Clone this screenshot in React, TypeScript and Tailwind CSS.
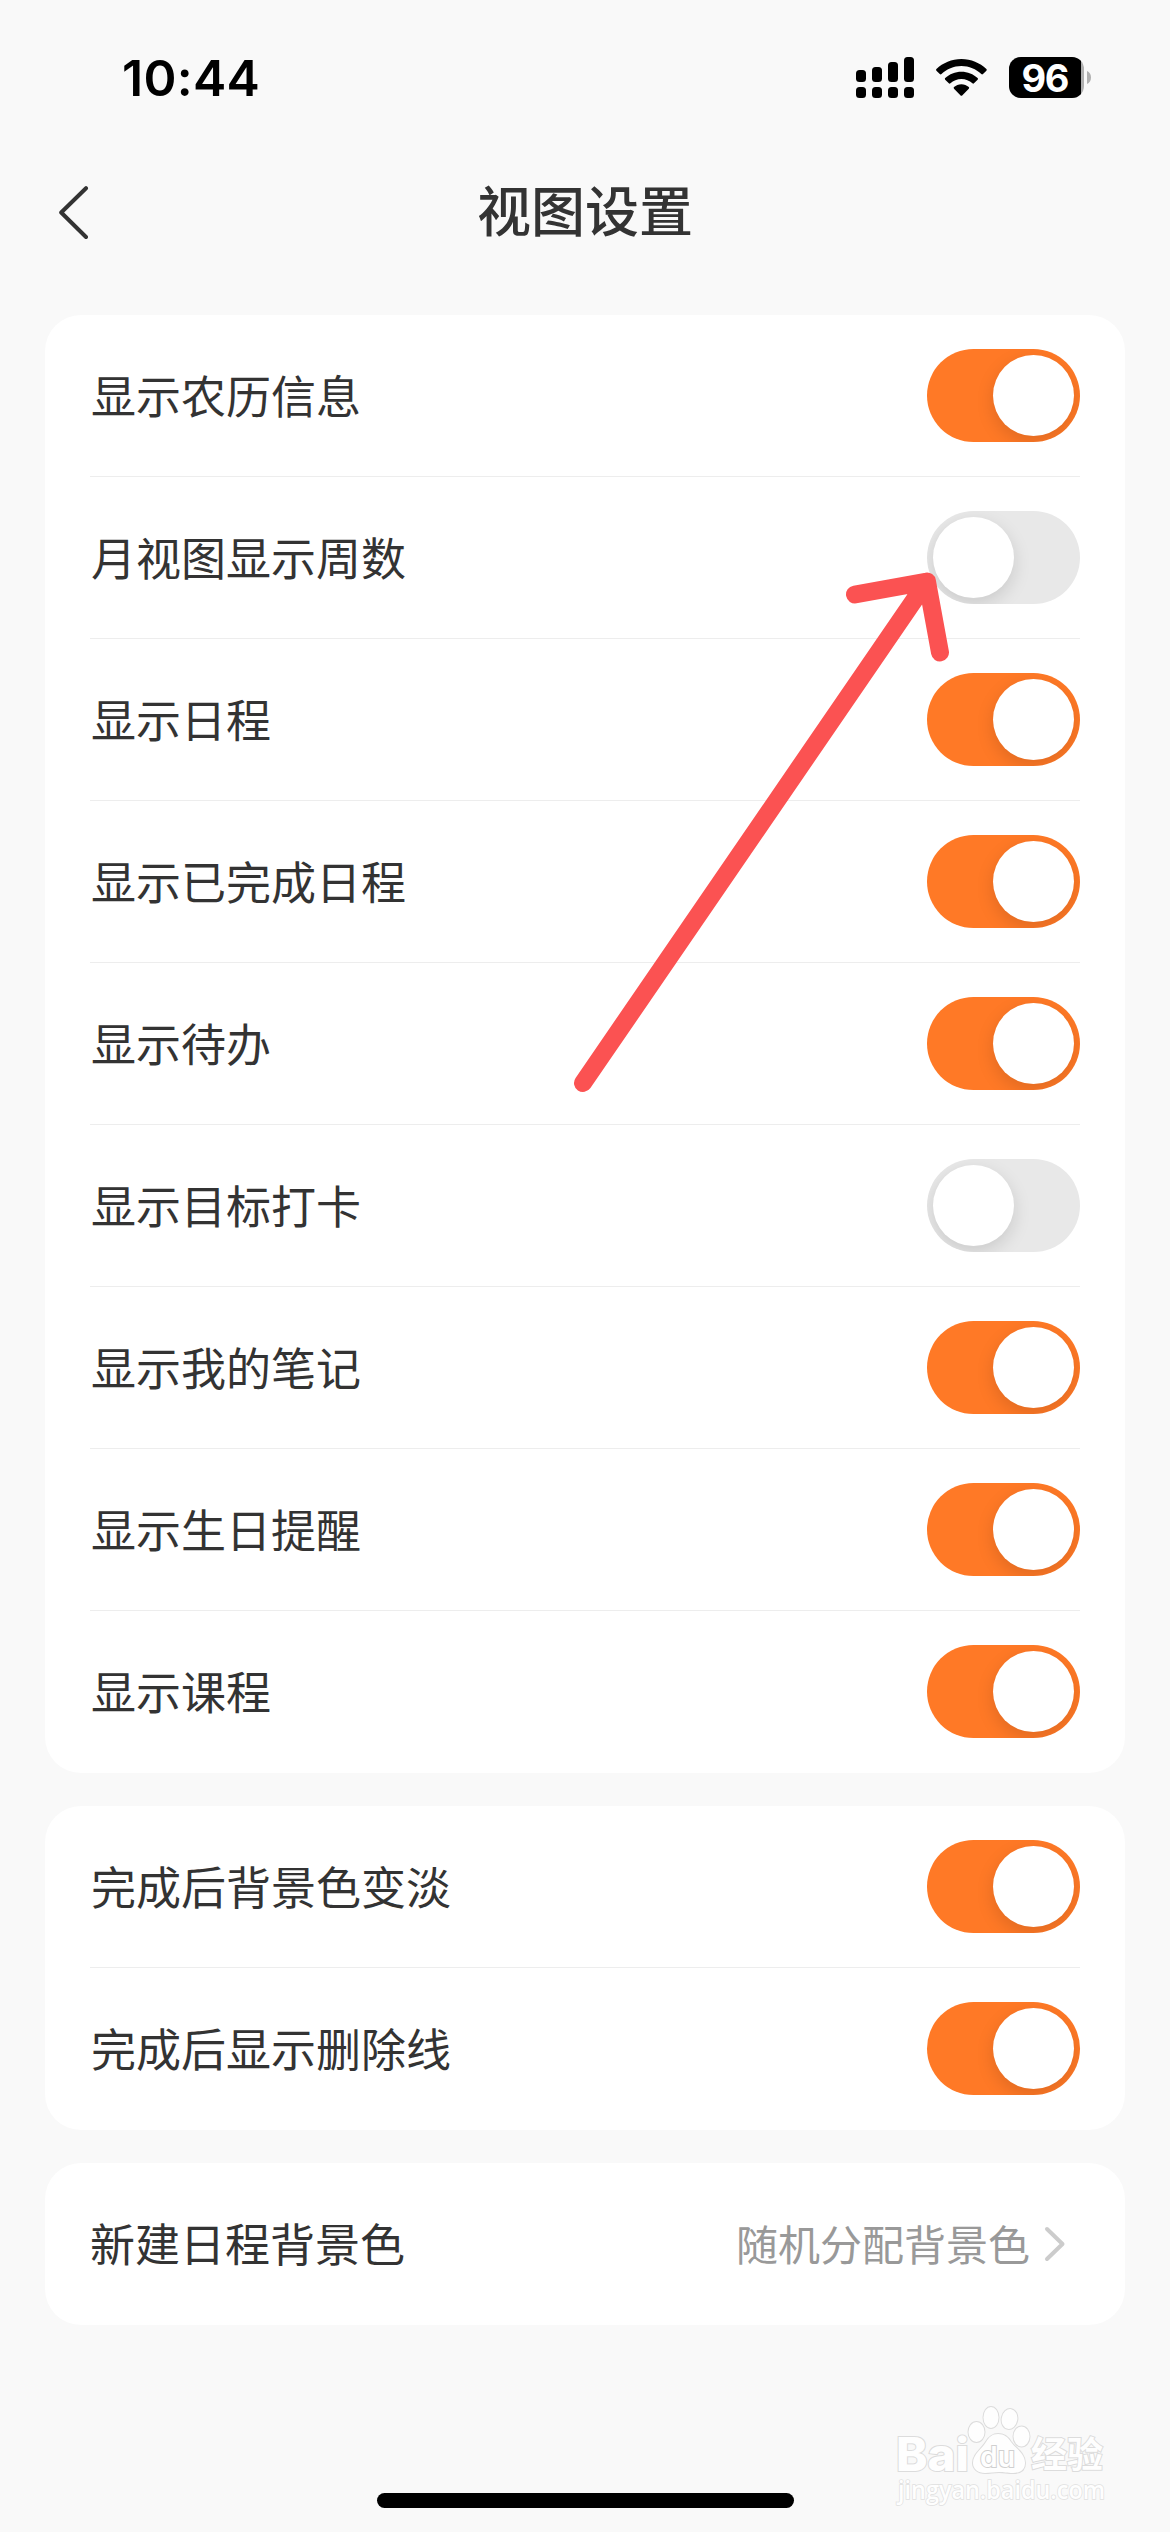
import { useState } from 'react'

type Option = { label: string; on: boolean }

const displayOptions: Option[] = [
  { label: '显示农历信息', on: true },
  { label: '月视图显示周数', on: false },
  { label: '显示日程', on: true },
  { label: '显示已完成日程', on: true },
  { label: '显示待办', on: true },
  { label: '显示目标打卡', on: false },
  { label: '显示我的笔记', on: true },
  { label: '显示生日提醒', on: true },
  { label: '显示课程', on: true },
]

const finishedOptions: Option[] = [
  { label: '完成后背景色变淡', on: true },
  { label: '完成后显示删除线', on: true },
]

function StatusBar() {
  return (
    <div className="flex h-[156px] items-start justify-between pt-[48px] pr-[79px] pl-[122px] font-['Inter',sans-serif] text-black">
      <div className="text-[50px] leading-[60px] font-semibold tracking-[0.3px]">10:44</div>
      <svg width="235" height="60" viewBox="856 48 235 60">
        <clipPath id="battery">
          <rect x="1009" y="57" width="75" height="41" rx="12" />
        </clipPath>
        <rect x="856" y="70" width="10" height="12" rx="3.5" />
        <rect x="872" y="67" width="10" height="15" rx="3.5" />
        <rect x="888" y="62" width="10" height="20" rx="3.5" />
        <rect x="904" y="57" width="10" height="25" rx="3.5" />
        <rect x="856" y="87" width="10" height="11" rx="3.5" />
        <rect x="872" y="87" width="10" height="11" rx="3.5" />
        <rect x="888" y="87" width="10" height="11" rx="3.5" />
        <rect x="904" y="87" width="10" height="11" rx="3.5" />
        <path d="M961.4 59c9.700 0 18.500 3.800 25 10.100.5.500.5 1.100 0 1.600l-3.400 3.400c-.5.500-1.200.5-1.700 0-5.200-5-12.200-8-19.900-8s-14.700 3-19.900 8c-.5.500-1.200.5-1.700 0l-3.400-3.400c-.5-.5-.5-1.100 0-1.600 6.500-6.300 15.300-10.100 25-10.100z" />
        <path d="M961.4 71.800c6.200 0 11.900 2.400 16.200 6.300.5.500.5 1.200 0 1.700l-3.600 3.500c-.5.500-1.100.5-1.600 0-2.900-2.600-6.800-4.200-11-4.200s-8.100 1.600-11 4.200c-.5.500-1.100.5-1.600 0l-3.600-3.500c-.5-.5-.5-1.200 0-1.700 4.300-3.900 10-6.300 16.200-6.300z" />
        <path d="M961.4 84.300c2.800 0 5.400 1.100 7.400 2.800.5.500.5 1.100 0 1.600l-6.600 6.700c-.5.500-1.100.5-1.600 0l-6.600-6.700c-.5-.5-.5-1.100 0-1.600 2-1.700 4.600-2.800 7.400-2.800z" />
        <g clipPath="url(#battery)">
          <rect x="1009" y="57" width="75" height="41" fill="#b0b0b0" />
          <rect x="1009" y="57" width="72" height="41" />
        </g>
        <path d="M1087 71c2.500 1 4 3.500 4 6.500s-1.500 5.500-4 6.500z" fill="#b0b0b0" />
        <text x="1045.500" y="91.500" textAnchor="middle" fontSize="38" fontWeight="700" fill="#fff" textLength="48">96</text>
      </svg>
    </div>
  )
}

function TitleBar() {
  return (
    <div className="grid h-[159px] grid-cols-3 items-start pt-5">
      <svg className="mt-[10px] ml-[58px]" width="32" height="54" viewBox="0 0 32 54" fill="none">
        <path d="M28 2.200 3.200 26.500 28 51" stroke="#333" strokeWidth="4" strokeLinecap="round" strokeLinejoin="round" />
      </svg>
      <h1 className="text-center text-[54px] leading-[66px] font-medium">视图设置</h1>
    </div>
  )
}

function Toggle({ on, onClick }: { on: boolean; onClick: () => void }) {
  return (
    <button
      onClick={onClick}
      className={`flex h-[93px] w-[153px] items-center overflow-hidden rounded-full p-[6px] ${on ? 'justify-end bg-[#ff7926]' : 'justify-start bg-[#e8e8e8]'}`}
    >
      <span className="size-[81px] rounded-full bg-white shadow-[0_6px_18px_rgba(0,0,0,0.13)]" />
    </button>
  )
}

function OptionCard({ options }: { options: Option[] }) {
  const [items, setItems] = useState(options)

  function toggle(index: number) {
    setItems(items.map((item, i) => (i === index ? { ...item, on: !item.on } : item)))
  }

  return (
    <div className="rounded-[36px] bg-white px-[45px]">
      {items.map((item, i) => (
        <div
          key={item.label}
          className="flex h-[162px] items-center justify-between border-b border-[#ededed] last:border-transparent"
        >
          <span className="pb-[2px] pl-px text-[45px] leading-[64px]">{item.label}</span>
          <Toggle on={item.on} onClick={() => toggle(i)} />
        </div>
      ))}
    </div>
  )
}

function Arrow() {
  return (
    <svg
      className="pointer-events-none absolute top-[560px] left-[560px]"
      width="400"
      height="550"
      viewBox="560 560 400 550"
      fill="none"
      stroke="#fb5252"
      strokeWidth="18"
      strokeLinecap="round"
      strokeLinejoin="round"
    >
      <path d="M583 1083 927 581.500M855 594.500 927 581.500l13 71" />
    </svg>
  )
}

function Watermark() {
  return (
    <svg
      className="pointer-events-none absolute top-[2400px] left-[890px]"
      width="225"
      height="110"
      viewBox="890 2400 225 110"
      fill="#fefefe"
      stroke="#dcdcdc"
      strokeWidth="2"
      paintOrder="stroke"
      fontFamily="Inter, sans-serif"
    >
      <text x="896" y="2471" fontSize="46" fontWeight="800" textLength="73" lengthAdjust="spacingAndGlyphs">Bai</text>
      <ellipse cx="976.500" cy="2432" rx="8" ry="10" />
      <ellipse cx="991" cy="2417.500" rx="7.500" ry="10.500" />
      <ellipse cx="1009.500" cy="2419" rx="7.800" ry="10" transform="rotate(10 1009.500 2419)" />
      <ellipse cx="1021.500" cy="2436.500" rx="8" ry="10" />
      <path d="M998 2434c6 0 10 3 13 8 4 6 14 11 14 21 0 7-5 10-12 10-6 0-9-1-14-1s-9 1-14 1c-7 0-12-4-12-10 0-9 9-14 13-21 3-5 6-8 12-8z" />
      <text x="980" y="2467" fontSize="29" fontWeight="600" stroke="#d0d0d0" textLength="35" lengthAdjust="spacingAndGlyphs">du</text>
      <text x="1031" y="2468" fontSize="36" fontWeight="700" fontFamily="'Noto Sans CJK SC', sans-serif">经验</text>
      <text x="898" y="2499" fontSize="25" fontWeight="600" stroke="#e0e0e0" strokeWidth="1.5" fontFamily="'Open Sans', sans-serif" textLength="207" lengthAdjust="spacingAndGlyphs">jingyan.baidu.com</text>
    </svg>
  )
}

export default function App() {
  return (
    <div className="relative flex h-[2532px] w-[1170px] flex-col overflow-hidden bg-[#f9f9f9] font-['Noto_Sans_CJK_SC',sans-serif] text-[#333]">
      <StatusBar />
      <TitleBar />

      <div className="flex flex-col gap-[33px] px-[45px]">
        <OptionCard options={displayOptions} />
        <OptionCard options={finishedOptions} />

        <div className="flex h-[162px] items-center justify-between rounded-[36px] bg-white pr-[59px] pl-[45px]">
          <span className="pb-[2px] text-[45px] leading-[64px]">新建日程背景色</span>
          <div className="flex items-center gap-[14px]">
            <span className="pb-[2px] text-[42px] leading-[60px] text-[#999]">随机分配背景色</span>
            <svg width="22" height="36" viewBox="0 0 22 36" fill="none">
              <path d="M3 3l15.500 15L3 33" stroke="#ccc" strokeWidth="4" strokeLinecap="round" strokeLinejoin="round" />
            </svg>
          </div>
        </div>
      </div>

      <div className="mx-auto mt-auto mb-[24px] h-[15px] w-[417px] rounded-full bg-black" />

      <Arrow />
      <Watermark />
    </div>
  )
}
